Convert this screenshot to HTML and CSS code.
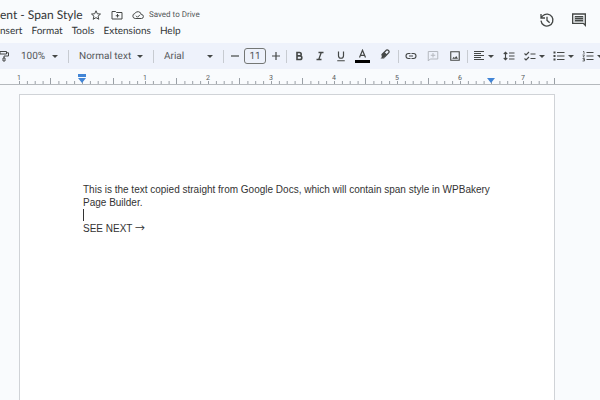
FILE: index.html
```html
<!DOCTYPE html>
<html lang="en">
<head>
  <meta charset="utf-8">
  <meta name="viewport" content="width=device-width, initial-scale=1">
  <title>Span Style</title>
  <link rel="stylesheet" href="styles.css">
</head>
<body>
  <header class="header">
    <div class="header-main">
      <div class="title-row">
        <h1 class="title">ent - Span Style</h1>
        <button class="icon-button" aria-label="Star">
          <svg width="12" height="12" viewBox="0 0 24 24"><path fill="none" stroke="#444746" stroke-width="2" d="M12 3.500l2.600 6 6.400.6-4.900 4.200 1.500 6.300L12 17.200l-5.600 3.400 1.500-6.300L3 10.100l6.400-.6z"/></svg>
        </button>
        <button class="icon-button" aria-label="Move">
          <svg width="12" height="12" viewBox="0 0 24 24"><path fill="none" stroke="#444746" stroke-width="2" d="M2 5h7l2 2h11v13H2zM13 10v7M9.500 13.500h7"/></svg>
        </button>
        <button class="saved">
          <svg width="12" height="12" viewBox="0 0 24 24"><path fill="none" stroke="#444746" stroke-width="2" d="M6.500 19a5 5 0 0 1-.8-9.900A6.800 6.800 0 0 1 18.500 11a4 4 0 0 1 .5 8zM8 13.500l3 3 5-5"/></svg>
          <span>Saved to Drive</span>
        </button>
      </div>
      <nav class="menu">
        <button>nsert</button>
        <button>Format</button>
        <button>Tools</button>
        <button>Extensions</button>
        <button>Help</button>
      </nav>
    </div>
    <div class="header-actions">
      <button class="icon-button" aria-label="Version history">
        <svg width="16" height="16" viewBox="0 0 24 24"><path fill="none" stroke="#444746" stroke-width="2" d="M3 13a9 9 0 1 0 2.500-7.200L3 8.500M3 3v6h6M12 7v5.500l4 3.500"/></svg>
      </button>
      <button class="icon-button" aria-label="Comments">
        <svg width="16" height="16" viewBox="0 0 24 24"><path fill="#b9bcbf" d="M5 6h14v9H5z"/><path fill="none" stroke="#444746" stroke-width="2" d="M2.500 3h19v17l-3-3h-16zM6 7h12M6 10h12M6 13h12"/></svg>
      </button>
    </div>
  </header>

  <div class="toolbar" role="toolbar" aria-label="Formatting">
    <button class="paint" aria-label="Paint format">
      <svg width="12" height="12" viewBox="0 0 24 24"><path fill="none" stroke="#444746" stroke-width="2" d="M4 3h13v5H4zM17 5.500h4V12h-9v4M10 16h4v6h-4z"/></svg>
    </button>
    <div class="pick pick-zoom"><select aria-label="Zoom"><option>100%</option></select></div>
    <span class="divider"></span>
    <div class="pick pick-style"><select aria-label="Styles"><option>Normal text</option></select></div>
    <span class="divider"></span>
    <div class="pick pick-font"><select aria-label="Font"><option>Arial</option></select></div>
    <span class="divider"></span>
    <button class="step" aria-label="Decrease font size">
      <svg width="8" height="8" viewBox="0 0 8 8"><path stroke="#444746" stroke-width="1.200" d="M0 4h8"/></svg>
    </button>
    <input class="size" type="text" value="11" aria-label="Font size">
    <button class="step" aria-label="Increase font size">
      <svg width="8" height="8" viewBox="0 0 8 8"><path stroke="#444746" stroke-width="1.200" d="M0 4h8M4 0v8"/></svg>
    </button>
    <span class="divider"></span>
    <button class="tool tool-letter" aria-label="Bold">
      <svg width="12" height="12" viewBox="0 0 24 24"><path fill="none" stroke="#444746" stroke-width="3.200" d="M8 5h5a3.300 3.300 0 0 1 0 6.800H8zM8 11.800h6a3.600 3.600 0 0 1 0 7.200H8z"/></svg>
    </button>
    <button class="tool tool-letter" aria-label="Italic">
      <svg width="12" height="12" viewBox="0 0 24 24"><path fill="none" stroke="#444746" stroke-width="2.600" d="M9 5h10M5 19h10M14.500 5l-5 14"/></svg>
    </button>
    <button class="tool tool-letter" aria-label="Underline">
      <svg width="12" height="12" viewBox="0 0 24 24"><path fill="none" stroke="#444746" stroke-width="2.400" d="M7 3v8.500a5 5 0 0 0 10 0V3M4.500 21.500h15"/></svg>
    </button>
    <button class="tool" aria-label="Text color">
      <svg width="16" height="14" viewBox="0 0 16 14"><path fill="none" stroke="#444746" stroke-width="1.200" d="M5.500 8.500l3-7.300 3 7.300M6.500 6.300h4"/><path d="M1 11h15v3H1z"/></svg>
    </button>
    <button class="tool tool-pen" aria-label="Highlight color">
      <svg width="12" height="16" viewBox="0 0 24 32"><path fill="#444746" d="M3 21l4-4 4 4H3z"/><path fill="none" stroke="#444746" stroke-width="2.500" d="M6 13l9-9q2-1 4 1t1 4l-9 9H7zM10 9l5 5"/><path fill="#444746" d="M6 13l4-4 5 5-4 4H7z"/></svg>
    </button>
    <span class="divider"></span>
    <button class="tool" aria-label="Insert link">
      <svg width="12" height="12" viewBox="0 0 24 24"><path fill="none" stroke="#444746" stroke-width="2.200" d="M11 7H7a5 5 0 0 0 0 10h4M13 7h4a5 5 0 0 1 0 10h-4M8 12h8"/></svg>
    </button>
    <button class="tool" aria-label="Add comment" disabled>
      <svg width="12" height="12" viewBox="0 0 24 24"><path fill="none" stroke="#b4b8bf" stroke-width="2" d="M2.500 22V3h19v15h-15zM12 6v9M7.500 10.500h9"/></svg>
    </button>
    <button class="tool" aria-label="Insert image">
      <svg width="12" height="12" viewBox="0 0 24 24"><path fill="none" stroke="#444746" stroke-width="2.200" d="M3.500 3.500h17v17h-17z"/><path fill="#444746" d="M6.500 17.500l3-4 2 2.500 3-4 3.500 5.500z"/></svg>
    </button>
    <span class="divider"></span>
    <button class="tool-menu" aria-label="Align">
      <svg width="12" height="12" viewBox="0 0 12 12"><path stroke="#444746" d="M1 1.500h10M1 3.500h7M1 5.500h10M1 7.500h7M1 9.500h10"/></svg>
    </button>
    <button class="tool" aria-label="Line spacing">
      <svg width="12" height="12" viewBox="0 0 24 24"><path fill="none" stroke="#444746" stroke-width="2.200" d="M5 4v16M1.500 8L5 4.500 8.500 8M1.500 16L5 19.500 8.500 16M12 6h11M12 12h11M12 18h11"/></svg>
    </button>
    <button class="tool-menu" aria-label="Checklist">
      <svg width="12" height="12" viewBox="0 0 24 24"><path fill="none" stroke="#444746" stroke-width="2.200" d="M1 7l3 3 6-6M1 17l3 3 6-6M13 8h10M13 17h10"/></svg>
    </button>
    <button class="tool-menu" aria-label="Bulleted list">
      <svg width="12" height="12" viewBox="0 0 24 24"><path fill="none" stroke="#444746" stroke-width="2.200" d="M8 5h15M8 12h15M8 19h15"/><path stroke="#444746" stroke-width="4" d="M1 5h4M1 12h4M1 19h4"/></svg>
    </button>
    <button class="tool-menu" aria-label="Numbered list">
      <svg width="12" height="12" viewBox="0 0 24 24"><path fill="none" stroke="#444746" stroke-width="2.200" d="M9 5h14M9 12h14M9 19h14"/><path fill="none" stroke="#444746" stroke-width="1.500" d="M2 3h2v5M1 10h4l-3 4h3M1 17h4v5H1M2 19.500h3"/></svg>
    </button>
  </div>

  <div class="ruler">
    <div class="ruler-numbers">
      <span>1</span><span></span><span>1</span><span>2</span><span>3</span><span>4</span><span>5</span><span>6</span><span>7</span>
    </div>
    <svg class="ruler-ticks" width="560" height="10" viewBox="0 0 560 10">
      <defs>
        <pattern id="inch" width="63" height="10" patternUnits="userSpaceOnUse">
          <path stroke="#9aa0a6" stroke-width="1" d="M.5 7v3M8.400 7v3M16.200 7v3M24.100 7v3M31.500 4v6M39.900 7v3M47.700 7v3M55.600 7v3"/>
        </pattern>
      </defs>
      <rect width="536" height="10" fill="url(#inch)"/>
      <path fill="#4285d6" d="M59 0h8v3h-8zM59 4h8l-4 5z"/>
      <path fill="#4285d6" d="M468 4h8l-4 5z"/>
    </svg>
  </div>

  <main class="page">
    <p>This is the text copied straight from Google Docs, which will contain span style in WPBakery Page Builder.</p>
    <p><span class="caret"></span></p>
    <p>SEE NEXT <span class="arrow">→</span></p>
  </main>
</body>
</html>
```
FILE: styles.css
```css
* {
  box-sizing: border-box;
}

body {
  margin: 0;
  height: 100vh;
  display: flex;
  flex-direction: column;
  overflow: hidden;
  background-color: #f9fbfd;
  font-family: Roboto, "Liberation Sans", sans-serif;
  color: #55585a;
  text-rendering: geometricPrecision;
}

button, select, input {
  margin: 0;
  padding: 0;
  border: none;
  background: none;
  color: inherit;
  font-family: inherit;
  font-size: 10px;
  text-rendering: inherit;
}

svg {
  display: block;
  flex: none;
}

/* title and menus */
.header {
  display: flex;
  justify-content: space-between;
  height: 43px;
}

.header-main {
  padding-top: 6px;
}

.title-row {
  display: flex;
  align-items: center;
  gap: 9px;
  height: 17px;
}

.title {
  width: 81px;
  margin: 0;
  font-family: Lato, sans-serif;
  font-size: 12px;
  line-height: 16px;
  font-weight: 400;
  white-space: nowrap;
  color: #333638;
}

.saved {
  display: flex;
  align-items: center;
  gap: 5px;
  font-size: 8px;
}

.menu {
  display: flex;
  gap: 9px;
}

.menu button {
  font-family: Lato, sans-serif;
  line-height: 16px;
  color: #333638;
}

.header-actions {
  display: flex;
  align-items: center;
  gap: 16px;
  padding: 0 13px 4px 0;
}

/* toolbar */
.toolbar {
  display: flex;
  align-items: center;
  height: 26px;
  background-color: #eef2fb;
  overflow: hidden;
}

.toolbar > * {
  flex: none;
}

.paint {
  display: flex;
  justify-content: flex-end;
  width: 12px;
  padding-right: 2px;
  overflow: hidden;
}

.divider {
  width: 1px;
  height: 13px;
  margin: 0 1px;
  background-color: #c7cbd1;
}

.pick {
  display: flex;
  align-items: center;
  padding: 0 9px;
}

.pick select {
  flex: 1;
  min-width: 0;
  appearance: none;
}

.pick::after, .tool-menu::after {
  content: "";
  border: 3px solid transparent;
  border-top-color: #444746;
  border-bottom: none;
}

.pick-zoom {
  width: 55px;
}

.pick-style {
  width: 82px;
}

.pick-font {
  width: 67px;
}

.step {
  display: flex;
  justify-content: center;
  width: 19px;
}

.size {
  width: 22px;
  height: 16px;
  border: 1px solid #747775;
  border-radius: 3px;
  text-align: center;
}

.tool {
  display: flex;
  justify-content: center;
  width: 22px;
}

.tool-letter {
  width: 21px;
}

.tool-pen {
  width: 24px;
}

.tool-menu {
  display: flex;
  align-items: center;
  gap: 3px;
  width: 29px;
  padding-left: 4px;
}

/* ruler */
.ruler {
  height: 16px;
  border-bottom: 1px solid #b5b9bd;
}

.ruler-numbers {
  display: flex;
  height: 5px;
  padding-left: 17px;
  font-size: 7px;
  line-height: 18px;
}

.ruler-numbers span {
  flex: none;
  width: 63px;
}

.ruler-ticks {
  margin-left: 19px;
}

/* document */
.page {
  flex: 1;
  width: 100%;
  max-width: 536px;
  margin: 9px 0 0 19px;
  padding: 88px 55px 0 63px;
  border: 1px solid #d0d3d7;
  border-bottom: none;
  background-color: #fff;
  color: #333;
  font-family: "Liberation Sans", Arial, sans-serif;
  font-size: 10px;
  line-height: 13px;
  text-rendering: auto;
}

.page p {
  margin: 0;
  min-height: 13px;
}

.arrow {
  font-family: "Noto Sans CJK JP", sans-serif;
  line-height: 1;
}

.caret {
  display: block;
  width: 1px;
  height: 12px;
  background-color: #333;
}
```
